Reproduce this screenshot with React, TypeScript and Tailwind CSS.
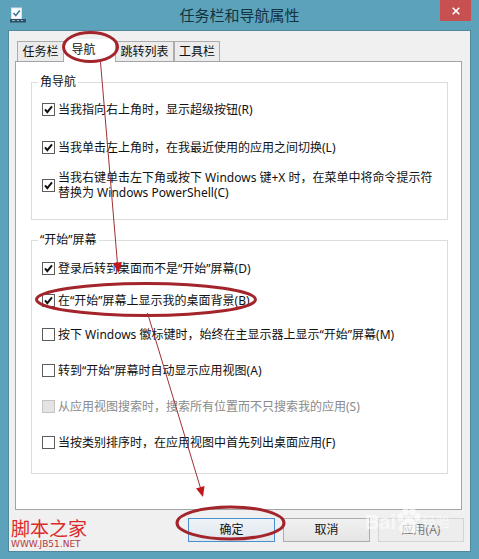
import { useState } from "react"
import clsx from "clsx"

const tabs = [
  { label: "任务栏", width: "w-[47px]" },
  { label: "导航", width: "w-[51px]" },
  { label: "跳转列表", width: "w-[59px]" },
  { label: "工具栏", width: "w-[46px]" },
]

type Option = {
  id: string
  label: string
  checked?: boolean
  disabled?: boolean
}

const cornerOptions: Option[] = [
  { id: "charms", label: "当我指向右上角时，显示超级按钮(R)", checked: true },
  { id: "switch", label: "当我单击左上角时，在我最近使用的应用之间切换(L)", checked: true },
  {
    id: "powershell",
    label: "当我右键单击左下角或按下 Windows 键+X 时，在菜单中将命令提示符替换为 Windows PowerShell(C)",
    checked: true,
  },
]

const startOptions: Option[] = [
  { id: "desktop", label: "登录后转到桌面而不是“开始”屏幕(D)", checked: true },
  { id: "background", label: "在“开始”屏幕上显示我的桌面背景(B)", checked: true },
  { id: "display", label: "按下 Windows 徽标键时，始终在主显示器上显示“开始”屏幕(M)" },
  { id: "apps", label: "转到“开始”屏幕时自动显示应用视图(A)" },
  { id: "search", label: "从应用视图搜索时，搜索所有位置而不只搜索我的应用(S)", disabled: true },
  { id: "sort", label: "当按类别排序时，在应用视图中首先列出桌面应用(F)" },
]

function CheckRow({ option, height }: { option: Option; height: string }) {
  return (
    <div className={clsx("flex items-center gap-[3px]", height)}>
      <span className="grid size-[13px] shrink-0">
        <input
          type="checkbox"
          id={option.id}
          defaultChecked={option.checked}
          disabled={option.disabled}
          className="peer col-start-1 row-start-1 size-[13px] appearance-none border border-[#5c5c5c] bg-white disabled:border-[#c4c4c4] disabled:bg-[#e4e4e4]"
        />
        <svg
          viewBox="0 0 13 13"
          className="pointer-events-none invisible col-start-1 row-start-1 size-[13px] peer-checked:visible"
          aria-hidden="true"
        >
          <path d="M3 6.4 L5.3 9.2 L10 3.4" fill="none" stroke="#111" strokeWidth="2" />
        </svg>
      </span>
      <label
        htmlFor={option.id}
        className={clsx("leading-[15px]", option.disabled ? "text-[#8a8a8a]" : "text-[#111]")}
      >
        {option.label}
      </label>
    </div>
  )
}

// Hand-drawn style circles and arrows that walk through the steps
function Annotations() {
  return (
    <svg
      width="479"
      height="559"
      viewBox="0 0 479 559"
      className="pointer-events-none absolute top-0 left-0"
      aria-hidden="true"
    >
      <g fill="none" stroke="#a3242a" strokeWidth="3">
        <ellipse cx="90.5" cy="47" rx="27" ry="14.5" />
        <ellipse cx="146" cy="299.5" rx="109.5" ry="16" />
        <ellipse cx="230.5" cy="523" rx="53.5" ry="16" />
      </g>
      <g stroke="#a03034" strokeWidth="1">
        <path d="M100.5 62 L117.5 264" />
        <path d="M147.5 313 L200.5 488" />
      </g>
      <path d="M113 263 L122 262 L118.5 273 Z" fill="#c4161c" />
      <path d="M196 488.5 L204.5 486 L203 497 Z" fill="#c4161c" />
    </svg>
  )
}

function Watermark() {
  return (
    <div
      className="pointer-events-none absolute right-5 -top-1 flex items-end text-white/60"
      aria-hidden="true"
    >
      <span className="font-['Liberation_Sans'] text-[20px] leading-6 font-bold">Bai</span>
      <svg viewBox="0 0 26 28" className="h-7 w-[26px]" fill="currentColor">
        <ellipse cx="4.5" cy="11" rx="3" ry="4" />
        <ellipse cx="9.5" cy="5" rx="3" ry="4" />
        <ellipse cx="16.5" cy="5" rx="3" ry="4" />
        <ellipse cx="21.5" cy="11" rx="3" ry="4" />
        <path d="M13 11 C17 11 18 15 21 18 C25 22 23 27 18 27 C15 27 11 27 8 27 C3 27 1 22 5 18 C8 15 9 11 13 11 Z" />
      </svg>
      <span className="text-[14px] leading-6">经验</span>
    </div>
  )
}

export default function App() {
  const [active, setActive] = useState("导航")

  return (
    <div className="relative min-h-screen w-full bg-[#5ca2ba] px-2 pb-2 font-['Noto_Sans','Noto_Sans_CJK_SC',sans-serif] text-[12px] text-[#111]">
      {/* Title bar */}
      <header className="relative flex h-[30px] items-center justify-center">
        <svg viewBox="0 0 16 16" className="absolute top-[7px] left-[2px] size-4" aria-hidden="true">
          <rect x="1.5" y="1" width="10" height="11" fill="#fff" stroke="#d5e2e8" />
          <path d="M3.5 6 L5.8 8.5 L9.8 3.5" fill="none" stroke="#3f7fa0" strokeWidth="1.7" />
          <rect x="0" y="12" width="16" height="3.5" fill="#2d5266" />
          <path d="M2 13.5 H5 M7 13.5 H9 M11 13.5 H13" stroke="#8fb4c4" />
        </svg>
        <h1 className="text-[15px] leading-5 text-[#12333f]">任务栏和导航属性</h1>
        <button
          type="button"
          aria-label="关闭"
          className="absolute top-0 right-0 flex h-[21px] w-[31px] items-center justify-center bg-[#c75050]"
        >
          <svg viewBox="0 0 8 8" className="size-2" aria-hidden="true">
            <path d="M0.7 0.7 L7.3 7.3 M7.3 0.7 L0.7 7.3" stroke="#fff" strokeWidth="1.6" />
          </svg>
        </button>
      </header>

      <main className="border border-[#518a9f] bg-[#f0f0f0] pt-2 pb-px">
        <div className="flex h-[22px] items-end pl-2" role="tablist">
          {tabs.map((tab) => (
            <button
              key={tab.label}
              type="button"
              role="tab"
              aria-selected={active === tab.label}
              onClick={() => setActive(tab.label)}
              className={clsx(
                "border border-b-0 whitespace-nowrap",
                tab.width,
                active === tab.label
                  ? "relative -mb-px h-[23px] border-white bg-white pr-3 pb-[2px]"
                  : "h-5 border-[#acacac] bg-[#ececec] pt-px",
              )}
            >
              {tab.label}
            </button>
          ))}
        </div>

        <div
          role="tabpanel"
          className="mr-2 ml-[6px] flex flex-col gap-3 border border-[#a0a4a6] bg-white pt-3 pr-[13px] pb-[35px] pl-[15px]"
        >
          <fieldset className="border border-[#dcdcdc] px-[10px] pb-[15px]">
            <legend className="-ml-1 px-[2px] leading-4">角导航</legend>
            {cornerOptions.map((option) => (
              <CheckRow key={option.id} option={option} height="min-h-[38px]" />
            ))}
          </fieldset>

          <fieldset className="border border-[#dcdcdc] px-[10px] pt-1 pb-[13px]">
            <legend className="-ml-1 px-[2px] leading-4">“开始”屏幕</legend>
            {startOptions.map((option, i) => (
              <CheckRow key={option.id} option={option} height={i < 2 ? "min-h-8" : "min-h-9"} />
            ))}
          </fieldset>
        </div>

        <footer className="relative flex items-start justify-between pt-2 pr-[6px] pl-[2px]">
          <div className="font-['Noto_Sans_CJK_SC',sans-serif] text-[#dc2a2a]">
            <p className="text-[19px] leading-5">脚本之家</p>
            <p className="font-['DejaVu_Sans'] text-[9px] leading-3 text-[#b03a3a]">WWW.JB51.NET</p>
          </div>
          <div className="flex gap-2">
            <button type="button" className="h-6 w-[87px] border border-[#4a90d0] bg-linear-to-b from-[#eef3f8] to-[#dfe6ec]">
              确定
            </button>
            <button type="button" className="h-6 w-[87px] border border-[#acacac] bg-linear-to-b from-[#f0f0f0] to-[#e5e5e5]">
              取消
            </button>
            <button type="button" disabled className="h-6 w-[86px] border border-[#d4d4d4] bg-[#ededed] text-[#777]">
              应用(A)
            </button>
          </div>
          <Watermark />
        </footer>
      </main>

      <Annotations />
    </div>
  )
}
